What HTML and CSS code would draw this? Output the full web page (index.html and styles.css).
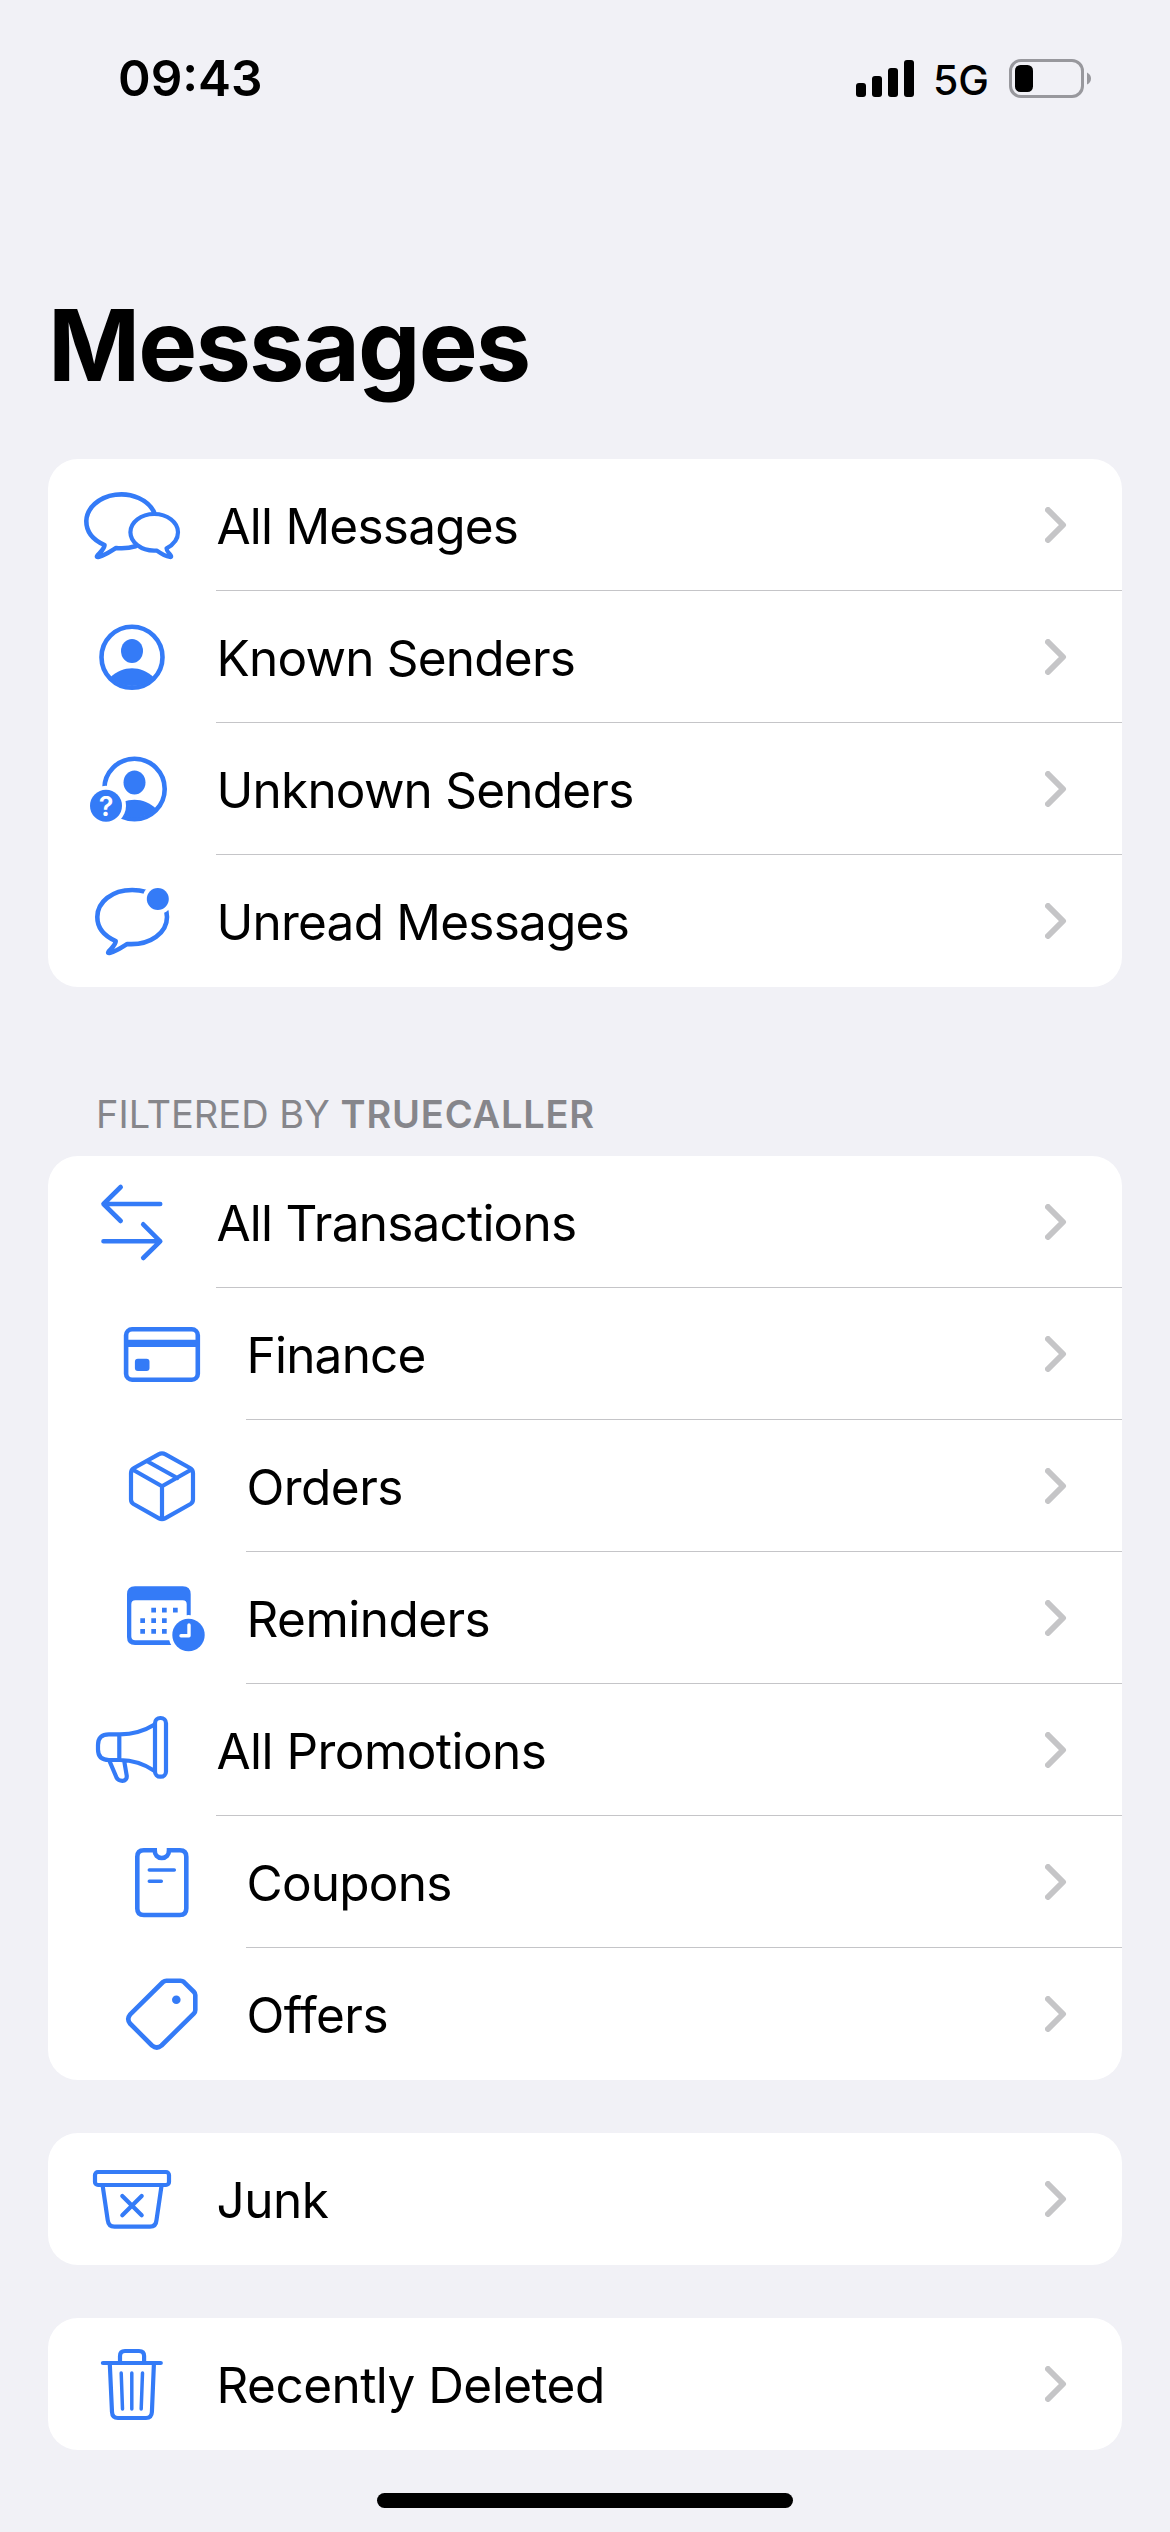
FILE: index.html
```html
<!DOCTYPE html>
<html lang="en">
<head>
<meta charset="utf-8">
<title>Messages</title>
<link rel="stylesheet" href="styles.css">
</head>
<body>
<svg class="defs" width="0" height="0">
  <symbol id="chevron" viewBox="0 0 22 36"><path d="M3 3 L18 18 L3 33"/></symbol>
</svg>

<header class="status">
  <span class="time">09:43</span>
  <div class="indicators">
    <svg class="signal" width="58" height="37" viewBox="0 0 58 37"><rect y="23" width="10" height="14" rx="3"/><rect x="16" y="16" width="10" height="21" rx="3"/><rect x="32" y="8" width="10" height="29" rx="3"/><rect x="48" width="10" height="37" rx="3"/></svg>
    <span class="network">5G</span>
    <svg class="battery" width="82" height="39" viewBox="0 0 82 39"><rect class="shell" x="1.5" y="1.5" width="72" height="36" rx="10.5"/><rect x="6" y="6" width="18" height="27" rx="5.5"/><path class="nub" d="M78 13.5 Q82 15.5 82 19.5 T78 25.5 Z"/></svg>
  </div>
</header>

<main>
  <h1>Messages</h1>

  <ul class="card">
    <li class="row"><svg class="icon" viewBox="0 0 120 96"><path d="M82 35 A35 27.3 0 0 0 14.3 44 C14.3 55 21 63 32.5 68 C32.5 72 28 75.5 25.5 78.5 C24.5 80 25 80.2 27 79.7 C34 78 38 74.5 44 71 C50 71.6 57 71.3 63.5 69.3"/><path class="thin" d="M106 55.3 A23.8 18.3 0 1 0 82.3 73.6 L85 73.7 C89 76.5 93 79 98 80 C99.5 80.3 99.5 79.5 98.5 78 C96.5 75.5 94.5 74.5 94.5 71.3 C102 67.5 106 62 106 55.3 Z"/></svg>
      <div class="cell"><span class="label">All Messages</span><svg class="chevron"><use href="#chevron"/></svg></div></li>
    <li class="row"><svg class="icon" viewBox="0 0 120 96"><circle cx="60" cy="48.3" r="30.5"/><ellipse class="solid" cx="60" cy="42" rx="11" ry="12"/><path class="solid" d="M38.5 68 C45 62.5 52 59.3 60 59.3 S75 62.5 81.5 68 A30 30 0 0 1 38.5 68 Z"/></svg>
      <div class="cell"><span class="label">Known Senders</span><svg class="chevron"><use href="#chevron"/></svg></div></li>
    <li class="row"><svg class="icon" viewBox="0 0 120 96"><circle cx="62.5" cy="48" r="30.2"/><ellipse class="solid" cx="62.5" cy="41.5" rx="11" ry="12"/><path class="solid" d="M41 67.5 C47.5 62 54.5 58.7 62.5 58.7 S77.5 62 84 67.5 A30 30 0 0 1 41 67.5 Z"/><circle class="gap" cx="34" cy="64.7" r="20"/><circle class="solid" cx="34" cy="64.7" r="16"/><text class="mark" x="34" y="74.7">?</text></svg>
      <div class="cell"><span class="label">Unknown Senders</span><svg class="chevron"><use href="#chevron"/></svg></div></li>
    <li class="row"><svg class="icon" viewBox="0 0 120 96"><path d="M60.2 17 C40 17 25.3 29 25.3 44 C25.3 55 32.2 63 43.7 68 C43.7 72 39.2 75.5 36.7 78.5 C35.7 80 36.2 80.2 38.2 79.7 C45.2 78 49.2 74.5 55.2 71 C79 72.5 95 59.5 95 44 C95 29 80.3 17 60.2 17 Z"/><circle class="gap" cx="85.8" cy="26" r="15.2"/><circle class="solid" cx="85.8" cy="26" r="11"/></svg>
      <div class="cell"><span class="label">Unread Messages</span><svg class="chevron"><use href="#chevron"/></svg></div></li>
  </ul>

  <h2>FILTERED BY <b>TRUECALLER</b></h2>

  <ul class="card">
    <li class="row"><svg class="icon" viewBox="0 0 120 96"><path d="M88.2 30 H31.5 M48.7 13 L31.5 30 L48.7 47 M31.5 67.3 H88.2 M71.2 50.3 L88.2 67.3 L71.2 84"/></svg>
      <div class="cell"><span class="label">All Transactions</span><svg class="chevron"><use href="#chevron"/></svg></div></li>
    <li class="row sub"><svg class="icon" viewBox="0 0 120 96"><rect x="24.1" y="23.3" width="71.7" height="50.4" rx="6"/><path class="solid" d="M24 33.7 H96 V41 H24 Z"/><rect class="solid" x="32.9" y="52.7" width="14.6" height="12.3" rx="3"/></svg>
      <div class="cell"><span class="label">Finance</span><svg class="chevron"><use href="#chevron"/></svg></div></li>
    <li class="row sub"><svg class="icon" viewBox="0 0 120 96"><path class="thin" d="M56.5 16.3 Q60 14.4 63.5 16.3 L88 30 Q91 31.7 91 35 V61.5 Q91 64.5 88.5 66 L63 80.3 Q60 82 57 80.3 L31.5 66 Q29 64.5 29 61.5 V35 Q29 31.7 32 30 Z M30.5 31.5 L60 48.3 L89.5 31.5 M60 48.3 V81 M44.7 23 L75.3 40"/></svg>
      <div class="cell"><span class="label loose">Orders</span><svg class="chevron"><use href="#chevron"/></svg></div></li>
    <li class="row sub"><svg class="icon" viewBox="0 0 120 96"><path class="solid" fill-rule="evenodd" d="M33 16.3 H80.7 Q88.7 16.3 88.7 24.3 V67 Q88.7 75 80.7 75 H33 Q25 75 25 67 V24.3 Q25 16.3 33 16.3 Z M33.3 30.3 Q29.3 30.3 29.3 34.3 V66.3 Q29.3 70.3 33.3 70.3 H80.7 Q84.7 70.3 84.7 66.3 V34.3 Q84.7 30.3 80.7 30.3 Z"/><path class="solid" d="M49.3 37.7h4.7v4.7h-4.7z M60 37.7h4.7v4.7h-4.7z M71 37.7h4.7v4.7h-4.7z M38.3 48.3h4.7v4.7h-4.7z M49.3 48.3h4.7v4.7h-4.7z M60 48.3h4.7v4.7h-4.7z M38.3 59h4.7v4.7h-4.7z M49.3 59h4.7v4.7h-4.7z M60 59h4.7v4.7h-4.7z"/><circle class="gap" cx="86.5" cy="65" r="20"/><circle class="solid" cx="86.5" cy="65" r="16.2"/><path class="hands" d="M87 55 V65.7 H79"/></svg>
      <div class="cell"><span class="label loose">Reminders</span><svg class="chevron"><use href="#chevron"/></svg></div></li>
    <li class="row"><svg class="icon" viewBox="0 0 120 96"><path class="thin" d="M82.7 22.5 C73 28.5 62 32.3 48 32.3 H37 Q26 32.3 26 43 V47.5 Q26 58 37 58 H48 C62 58 73 62.5 82.7 69 M47.3 32.3 V58 M37.7 59.5 L44.5 75.5 C46 79.5 55.5 81 54.7 73.5 L52.3 59.5"/><rect class="thin" x="83" y="16" width="11" height="58.7" rx="5.3"/></svg>
      <div class="cell"><span class="label loose">All Promotions</span><svg class="chevron"><use href="#chevron"/></svg></div></li>
    <li class="row sub"><svg class="icon" viewBox="0 0 120 96"><path class="butt" d="M42 16.3 H52.7 C52.7 21 55.5 24 59.8 24 S67 21 67 16.3 H77.8 Q84.3 16.3 84.3 22.8 V74.5 Q84.3 81 77.8 81 H41.8 Q35.3 81 35.3 74.5 V22.8 Q35.3 16.3 41.8 16.3 Z"/><path class="fine" d="M47.3 36 H72.3 M47.3 47.3 H59.3"/></svg>
      <div class="cell"><span class="label">Coupons</span><svg class="chevron"><use href="#chevron"/></svg></div></li>
    <li class="row sub"><svg class="icon" viewBox="0 0 120 96"><path d="M61 16 Q62.5 14.7 64.5 14.7 H78.5 Q80.5 14.7 81.7 15.8 L92 26 Q93.3 27.3 93.3 29 V44 Q93.3 46 92 47.3 L59.5 79.5 Q54.8 83.5 50 79.5 L28 57.5 Q24.5 53 28 48.7 Z"/><circle class="solid" cx="74.3" cy="33.7" r="4.3"/></svg>
      <div class="cell"><span class="label loose">Offers</span><svg class="chevron"><use href="#chevron"/></svg></div></li>
  </ul>

  <ul class="card">
    <li class="row"><svg class="icon" viewBox="0 0 120 96"><rect class="thin" x="23" y="21" width="74" height="13" rx="3"/><path class="thin" d="M30.7 35 L35.7 69 Q36.5 75.7 42.5 75.7 H78 Q84 75.7 84.5 69 L89.5 35"/><path class="thin" d="M50.3 45 L69.7 64.3 M69.7 45 L50.3 64.3"/></svg>
      <div class="cell"><span class="label loose">Junk</span><svg class="chevron"><use href="#chevron"/></svg></div></li>
  </ul>

  <ul class="card">
    <li class="row"><svg class="icon" viewBox="0 0 120 96"><path class="thin" d="M30.9 27 H88.8 M48 27 V20 Q48 15 53 15 H67 Q72.1 15 72.1 20 V27 M37.8 28 L40 76 Q40.3 82 46 82 H74 Q79.6 82 79.9 76 L81.9 28"/><path class="fine" d="M49.2 37 L50.5 73 M59.8 37 V73 M70.5 37 L69.2 73"/></svg>
      <div class="cell"><span class="label loose">Recently Deleted</span><svg class="chevron"><use href="#chevron"/></svg></div></li>
  </ul>
</main>
<div class="home"></div>
</body>
</html>
```

FILE: styles.css
```css
* { box-sizing: border-box; }

body {
  margin: 0;
  width: 1170px;
  height: 2532px;
  overflow: hidden;
  display: flex;
  flex-direction: column;
  background: #f1f1f6;
  color: #000;
  font-family: Inter, "Liberation Sans", sans-serif;
}

.defs { position: absolute; }

.status {
  display: flex;
  justify-content: space-between;
  align-items: center;
  height: 156px;
  padding: 0 79px 0 118px;
}
.time { font-size: 49.5px; font-weight: 600; }
.indicators { display: flex; align-items: center; }
.network { margin: 3px 20px 0 19px; font-size: 41px; font-weight: 500; }
.battery .shell { fill: none; stroke: #98989d; stroke-width: 3; }
.battery .nub { fill: #98989d; }

main { padding: 129px 48px 0; }

h1 {
  margin: 0 0 54px;
  font-size: 99px;
  line-height: 120px;
  font-weight: 700;
  letter-spacing: -1.9px;
}

h2 {
  margin: -16px 0 0;
  padding-left: 48px;
  height: 72px;
  font-size: 38px;
  line-height: 60px;
  font-weight: 400;
  color: #86868b;
}
h2 b { font-weight: 600; letter-spacing: 0.8px; }

.card {
  list-style: none;
  margin: 0 0 53px;
  padding: 0;
  border-radius: 30px;
  overflow: hidden;
  background: #fff;
}
.card:first-of-type { margin-bottom: 113px; }

.row {
  display: flex;
  align-items: center;
  height: 132px;
  padding-left: 24px;
}
.row.sub { padding-left: 54px; }

.icon {
  flex: none;
  width: 120px;
  height: 96px;
  margin-right: 24px;
  fill: none;
  stroke: #347bf7;
  stroke-width: 4.6;
  stroke-linecap: round;
  stroke-linejoin: round;
}
.icon .thin { stroke-width: 4.2; }
.icon .fine { stroke-width: 3.5; }
.icon .butt { stroke-linejoin: miter; }
.icon .solid { fill: #347bf7; stroke: none; }
.icon .gap { fill: #fff; stroke: none; }
.icon .hands { stroke: #fff; stroke-width: 3.4; }
.icon .mark {
  fill: #fff;
  stroke: none;
  font-size: 27px;
  font-weight: 600;
  text-anchor: middle;
}

.cell {
  flex: 1;
  display: flex;
  justify-content: space-between;
  align-items: center;
  height: 132px;
  padding: 0 55px 0 0;
  border-bottom: 1px solid #c5c5c8;
}
.row:last-child .cell { border-bottom-color: transparent; }

.label {
  padding: 3px 0 0 0.5px;
  font-size: 49.5px;
  letter-spacing: -0.78px;
  white-space: nowrap;
}
.label.loose { letter-spacing: -0.54px; }

.chevron {
  width: 22px;
  height: 36px;
  fill: none;
  stroke: #c5c5c7;
  stroke-width: 6;
  stroke-linecap: round;
  stroke-linejoin: round;
}

.home {
  width: 416px;
  height: 15px;
  margin: -10px auto 0;
  border-radius: 8px;
  background: #000;
}
```
